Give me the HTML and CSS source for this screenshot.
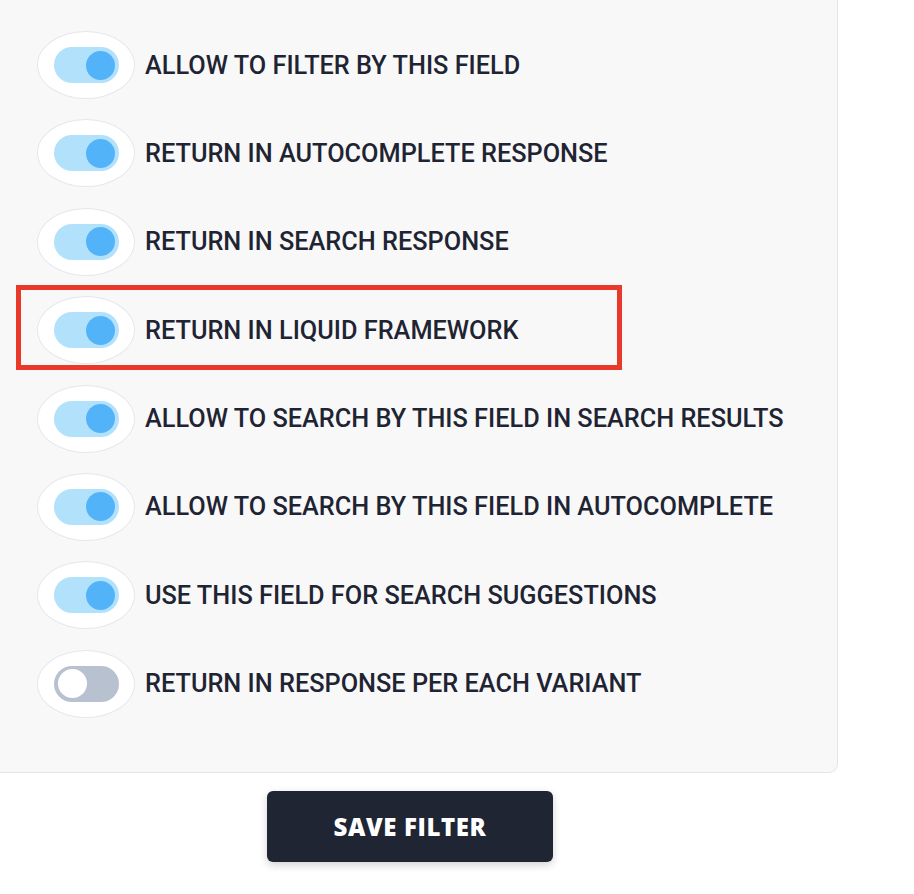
FILE: index.html
```html
<!DOCTYPE html>
<html>
<head>
<meta charset="utf-8">
<link rel="stylesheet" href="styles.css">
</head>
<body>
<div class="panel">
  <div class="rows">
    <div class="row"><span class="pill"><span class="track on"><span class="knob"></span></span></span><span class="label">ALLOW TO FILTER BY THIS FIELD</span></div>
    <div class="row"><span class="pill"><span class="track on"><span class="knob"></span></span></span><span class="label">RETURN IN AUTOCOMPLETE RESPONSE</span></div>
    <div class="row"><span class="pill"><span class="track on"><span class="knob"></span></span></span><span class="label">RETURN IN SEARCH RESPONSE</span></div>
    <div class="row"><span class="pill"><span class="track on"><span class="knob"></span></span></span><span class="label">RETURN IN LIQUID FRAMEWORK</span></div>
    <div class="row"><span class="pill"><span class="track on"><span class="knob"></span></span></span><span class="label">ALLOW TO SEARCH BY THIS FIELD IN SEARCH RESULTS</span></div>
    <div class="row"><span class="pill"><span class="track on"><span class="knob"></span></span></span><span class="label">ALLOW TO SEARCH BY THIS FIELD IN AUTOCOMPLETE</span></div>
    <div class="row"><span class="pill"><span class="track on"><span class="knob"></span></span></span><span class="label">USE THIS FIELD FOR SEARCH SUGGESTIONS</span></div>
    <div class="row"><span class="pill"><span class="track off"><span class="knob"></span></span></span><span class="label">RETURN IN RESPONSE PER EACH VARIANT</span></div>
  </div>
  <div class="highlight"></div>
</div>
<div class="actions">
  <button class="save">SAVE FILTER</button>
</div>
</body>
</html>
```
FILE: styles.css
```css
html, body {
  margin: 0;
  padding: 0;
  background: #ffffff;
}
body {
  font-family: Roboto, "Liberation Sans", sans-serif;
  width: 914px;
  height: 894px;
  overflow: hidden;
}
.panel {
  position: relative;
  box-sizing: border-box;
  width: 838px;
  height: 773px;
  background: #f8f8f9;
  border-right: 1px solid #e3e5ea;
  border-bottom: 1px solid #e3e5ea;
  border-bottom-right-radius: 9px;
  padding: 31px 0 0 37px;
}
.rows {
  display: flex;
  flex-direction: column;
  gap: 20.4px;
}
.row {
  display: flex;
  align-items: center;
  height: 68px;
  gap: 10px;
}
.pill {
  box-sizing: border-box;
  width: 98px;
  height: 68px;
  border-radius: 50%;
  background: #ffffff;
  border: 1px solid #e6e7ec;
  display: flex;
  align-items: center;
  justify-content: center;
  flex: none;
}
.track {
  box-sizing: border-box;
  width: 65px;
  height: 36px;
  border-radius: 18px;
  padding: 3px 4px;
  display: flex;
  align-items: center;
}
.track.on {
  background: #b2e1fb;
  justify-content: flex-end;
}
.track.off {
  background: #b8c1d0;
  justify-content: flex-start;
}
.knob {
  width: 29px;
  height: 29px;
  border-radius: 50%;
}
.track.on .knob {
  background: #53b3f9;
}
.track.off .knob {
  background: #ffffff;
}
.label {
  font-size: 25.3px;
  font-weight: 500;
  color: #1f2433;
  white-space: nowrap;
}
.highlight {
  position: absolute;
  left: 16px;
  top: 285px;
  width: 606px;
  height: 85px;
  box-sizing: border-box;
  border: 5.5px solid #e8392a;
  pointer-events: none;
}
.actions {
  display: flex;
  padding: 18px 0 0 267px;
}
.save {
  width: 286px;
  height: 71px;
  border: none;
  border-radius: 6px;
  background: #202533;
  color: #ffffff;
  font-family: "Open Sans", Lato, sans-serif;
  font-weight: 800;
  font-size: 24px;
  letter-spacing: 0.6px;
  box-shadow: 0 3px 8px rgba(0, 0, 0, 0.18);
}
```
